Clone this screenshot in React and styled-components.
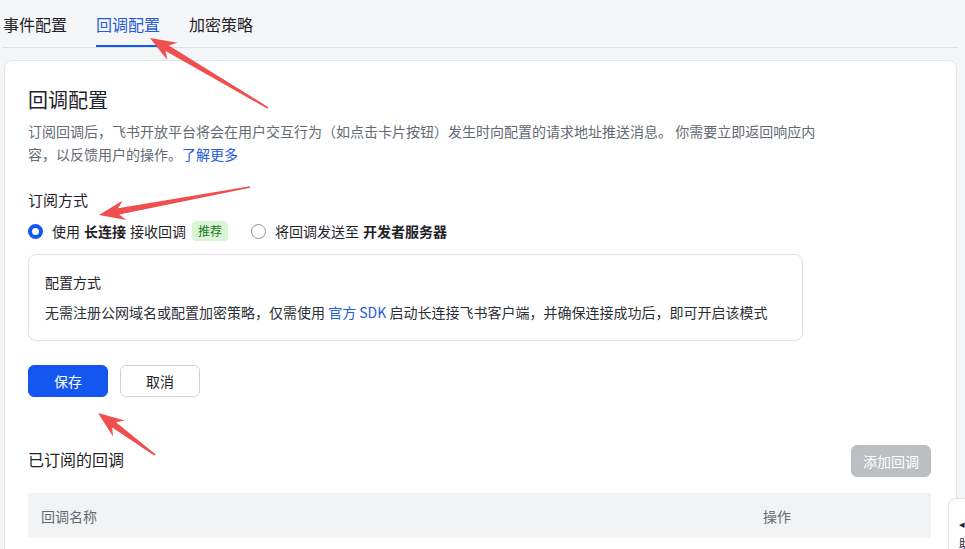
import React from 'react'
import styled, { createGlobalStyle, css } from 'styled-components'

const GlobalStyle = createGlobalStyle`
  html, body {
    margin: 0;
    height: 549px;
    overflow: hidden;
    background: #f5f6f7;
    font-family: "Noto Sans CJK SC", "Noto Sans", sans-serif;
    color: #1f2329;
  }
  * { box-sizing: border-box; }
`

const Page = styled.div`
  position: relative;
  height: 549px;
  padding: 0 7px 0 3px;
`

const TabBar = styled.div`
  display: flex;
  gap: 29px;
  height: 48px;
  border-bottom: 1px solid #dee0e3;
`

const Tab = styled.div`
  display: flex;
  align-items: center;
  height: 47px;
  font-size: 16px;
  color: #1f2329;
  ${props => props.active && css`
    color: #245bdb;
    box-shadow: inset 0 -2px 0 #1456f0;
  `}
`

const Card = styled.div`
  margin: 12px 1px 0;
  background: #fff;
  border: 1px solid #e4e5e7;
  border-radius: 8px;
  padding: 25px 25px 0 23px;
  height: 520px;
`

const Title = styled.div`
  font-size: 20px;
  line-height: 28px;
`

const Desc = styled.p`
  margin: 6px 0 0;
  max-width: 796px;
  font-size: 14px;
  line-height: 23px;
  color: #646a73;
`

const Link = styled.a`
  color: #245bdb;
  text-decoration: none;
`

const Label = styled.div`
  margin-top: 23px;
  font-size: 15px;
  line-height: 22px;
`

const RadioRow = styled.div`
  display: flex;
  align-items: center;
  gap: 23px;
  margin-top: 9px;
  height: 22px;
`

const RadioOption = styled.label`
  display: flex;
  align-items: center;
  font-size: 14px;
  line-height: 22px;
  color: #1f2329;
`

const Radio = styled.span`
  width: 15px;
  height: 15px;
  border-radius: 50%;
  margin-right: 9px;
  flex: none;
  border: ${props => (props.checked ? '4.5px solid #1456f0' : '1px solid #8f959e')};
  background: #fff;
`

const Strong = styled.b`
  font-weight: 700;
  margin: 0 4px;
`

const Tag = styled.span`
  margin-left: 6px;
  height: 20px;
  padding: 0 6px;
  border-radius: 4px;
  background: #d9f5d6;
  color: #237b19;
  font-size: 12px;
  line-height: 20px;
`

const InfoBox = styled.div`
  margin-top: 12px;
  width: 775px;
  border: 1px solid #dee0e3;
  border-radius: 8px;
  padding: 16px 16px 17px;
`

const BoxTitle = styled.div`
  font-size: 14px;
  line-height: 22px;
`

const BoxText = styled.div`
  margin-top: 8px;
  font-size: 14px;
  line-height: 22px;
  color: #2b2f36;
`

const Actions = styled.div`
  display: flex;
  gap: 12px;
  margin-top: 24px;
`

const Button = styled.button`
  width: 80px;
  height: 32px;
  border-radius: 6px;
  font-family: inherit;
  font-size: 14px;
  border: 1px solid #d0d3d6;
  background: #fff;
  color: #1f2329;
  ${props => props.primary && css`
    border-color: #1456f0;
    background: #1456f0;
    color: #fff;
  `}
  ${props => props.disabled && css`
    border-color: #bbbfc4;
    background: #bbbfc4;
    color: #fff;
  `}
`

const SubHeader = styled.div`
  display: flex;
  align-items: center;
  justify-content: space-between;
  margin-top: 48px;
  height: 32px;
`

const SubTitle = styled.div`
  font-size: 16px;
  line-height: 24px;
  margin-top: -5px;
`

const TableHead = styled.div`
  display: grid;
  grid-template-columns: 1fr 181px;
  margin-top: 16px;
  height: 45px;
  background: #f2f3f5;
  align-items: center;
`

const HeadCell = styled.div`
  padding-left: 13px;
  font-size: 14px;
  color: #646a73;
`

const Widget = styled.div`
  position: absolute;
  left: 948px;
  top: 498px;
  width: 40px;
  height: 70px;
  background: #fff;
  border: 1px solid #e4e5e7;
  border-radius: 8px;
  padding: 14px 0 0 10px;
  font-size: 11px;
  line-height: 20px;
  color: #1f2329;
`

const Overlay = styled.svg`
  position: absolute;
  left: 0;
  top: 0;
  pointer-events: none;
`

const arrowPoints = (x1, y1, x2, y2) => {
  const len = Math.hypot(x2 - x1, y2 - y1)
  const ux = (x2 - x1) / len
  const uy = (y2 - y1) / len
  const nx = -uy
  const ny = ux
  const H = 24
  const p = (a, b) => `${(x2 - ux * a + nx * b).toFixed(1)},${(y2 - uy * a + ny * b).toFixed(1)}`
  return [
    `${x1 + nx * 0.8},${y1 + ny * 0.8}`,
    p(H - 4, 3.2),
    p(H + 2, 10),
    `${x2},${y2}`,
    p(H + 2, -10),
    p(H - 4, -3.2),
    `${x1 - nx * 0.8},${y1 - ny * 0.8}`,
  ].join(' ')
}

const Arrows = () => (
  <Overlay width="965" height="549" viewBox="0 0 965 549">
    <polygon points={arrowPoints(268, 108, 150, 38)} fill="#ef4f4f" />
    <polygon points={arrowPoints(250, 187, 99, 215)} fill="#ef4f4f" />
    <polygon points={arrowPoints(155, 455, 98, 413)} fill="#ef4f4f" />
  </Overlay>
)

export default function App() {
  return (
    <Page>
      <GlobalStyle />
      <TabBar>
        <Tab>事件配置</Tab>
        <Tab active>回调配置</Tab>
        <Tab>加密策略</Tab>
      </TabBar>
      <Card>
        <Title>回调配置</Title>
        <Desc>
          订阅回调后，飞书开放平台将会在用户交互行为（如点击卡片按钮）发生时向配置的请求地址推送消息。 你需要立即返回响应内容，以反馈用户的操作。<Link href="#">了解更多</Link>
        </Desc>
        <Label>订阅方式</Label>
        <RadioRow>
          <RadioOption>
            <Radio checked />使用<Strong>长连接</Strong>接收回调<Tag>推荐</Tag>
          </RadioOption>
          <RadioOption>
            <Radio />将回调发送至<Strong>开发者服务器</Strong>
          </RadioOption>
        </RadioRow>
        <InfoBox>
          <BoxTitle>配置方式</BoxTitle>
          <BoxText>
            无需注册公网域名或配置加密策略，仅需使用 <Link href="#">官方 SDK</Link> 启动长连接飞书客户端，并确保连接成功后，即可开启该模式
          </BoxText>
        </InfoBox>
        <Actions>
          <Button primary>保存</Button>
          <Button>取消</Button>
        </Actions>
        <SubHeader>
          <SubTitle>已订阅的回调</SubTitle>
          <Button disabled>添加回调</Button>
        </SubHeader>
        <TableHead>
          <HeadCell>回调名称</HeadCell>
          <HeadCell>操作</HeadCell>
        </TableHead>
      </Card>
      <Widget>
        ◂<br />助
      </Widget>
      <Arrows />
    </Page>
  )
}
